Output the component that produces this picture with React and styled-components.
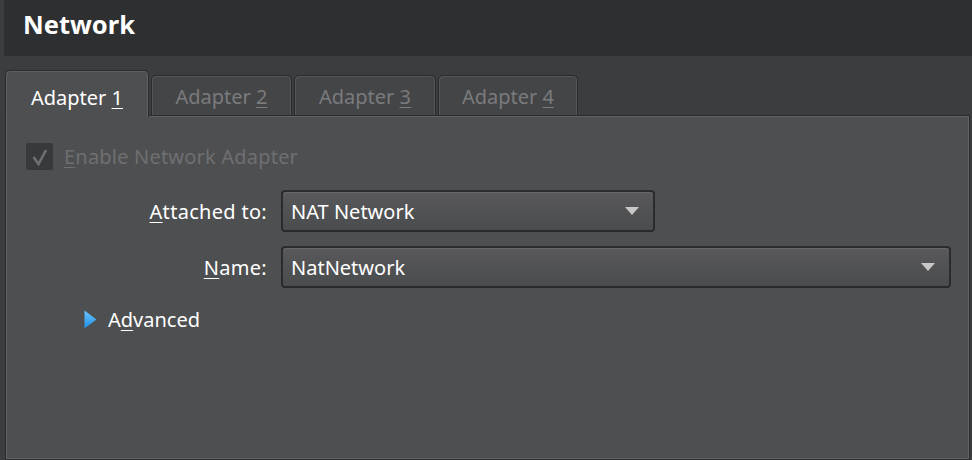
import styled, { createGlobalStyle } from 'styled-components';

const Global = createGlobalStyle`
  html, body {
    margin: 0;
    padding: 0;
    background: #3c3d3f;
    font-family: "Segoe UI", "Noto Sans", "Open Sans", sans-serif;
  }
`;

const Page = styled.div`
  width: 972px;
  height: 460px;
  display: flex;
  flex-direction: column;
  overflow: hidden;
  background: #3c3d3f;
`;

const Header = styled.div`
  margin-left: 4px;
  height: 56px;
  flex-shrink: 0;
  background: #2e2f31;
  display: flex;
  align-items: center;
  padding: 0 0 9px 19px;
  box-sizing: border-box;
  color: #ffffff;
  font-size: 25.5px;
  font-weight: 700;
`;

const TabBar = styled.div`
  display: flex;
  align-items: flex-end;
  gap: 2px;
  margin: 14px 0 0 5px;
  position: relative;
  z-index: 1;
`;

const Tab = styled.div`
  box-sizing: border-box;
  height: ${p => (p.$active ? '47px' : '40px')};
  width: ${p => p.$w}px;
  margin-bottom: ${p => (p.$active ? '-2px' : '0')};
  padding-top: ${p => (p.$active ? '6px' : '2px')};
  display: flex;
  align-items: center;
  justify-content: center;
  border: 1px solid #2a2b2d;
  border-bottom: none;
  border-radius: 5px 5px 0 0;
  background: ${p => (p.$active ? '#4e4f51' : '#444547')};
  box-shadow: inset 1px 1px 0 ${p => (p.$active ? '#5e5f61' : '#555658')},
    inset -1px 0 0 ${p => (p.$active ? '#5e5f61' : '#555658')};
  color: ${p => (p.$active ? '#ffffff' : '#7a7b7d')};
  font-size: 20px;
`;

const U = styled.span`
  text-decoration: underline;
  text-underline-offset: 3px;
  text-decoration-thickness: 1px;
`;

const Pane = styled.div`
  flex: 1;
  margin: 0 2px 0 5px;
  border: 1px solid #2a2b2d;
  box-shadow: inset 0 0 0 1px #626365;
  background: #4e4f51;
  padding: 27px 18px 0 20px;
  display: flex;
  flex-direction: column;
`;

const CheckRow = styled.div`
  display: flex;
  align-items: center;
  gap: 11px;
  color: #6e6f71;
  font-size: 20px;
  letter-spacing: 0.2px;
`;

const CheckBox = styled.div`
  width: 27px;
  height: 27px;
  background: #38393b;
  border-radius: 2px;
  display: flex;
  align-items: center;
  justify-content: center;
`;

const Form = styled.div`
  display: grid;
  grid-template-columns: 241px 1fr;
  column-gap: 14px;
  row-gap: 14px;
  margin-top: 20px;
  align-items: center;
`;

const Label = styled.div`
  text-align: right;
  color: #ffffff;
  font-size: 20px;
  letter-spacing: 0.3px;
`;

const Combo = styled.div`
  box-sizing: border-box;
  height: 42px;
  width: ${p => (p.$w ? `${p.$w}px` : '100%')};
  border: 2px solid #2a2b2d;
  border-radius: 4px;
  background: linear-gradient(#59595b, #505153 55%, #4b4c4e);
  box-shadow: inset 0 1px 0 #676869;
  display: flex;
  align-items: center;
  justify-content: space-between;
  padding: 0 14px 0 8px;
  color: #ffffff;
  font-size: 20px;
`;

const Arrow = styled.div`
  width: 0;
  height: 0;
  border-left: 7px solid transparent;
  border-right: 7px solid transparent;
  border-top: 8px solid #c8c8c8;
`;

const Advanced = styled.div`
  display: flex;
  align-items: center;
  gap: 11px;
  margin: 18px 0 0 58px;
  color: #ffffff;
  font-size: 20px;
`;

const tabs = [
  { n: '1', w: 144 },
  { n: '2', w: 141 },
  { n: '3', w: 142 },
  { n: '4', w: 140 },
];

export default function App() {
  return (
    <Page>
      <Global />
      <Header>Network</Header>
      <TabBar>
        {tabs.map((t, i) => (
          <Tab key={t.n} $active={i === 0} $w={t.w}>
            <span>
              Adapter <U>{t.n}</U>
            </span>
          </Tab>
        ))}
      </TabBar>
      <Pane>
        <CheckRow>
          <CheckBox>
            <svg width="18" height="18" viewBox="0 0 18 18">
              <path d="M2.5 9 L7.5 16 L15 2" fill="none" stroke="#6e6f71" strokeWidth="2.6" />
            </svg>
          </CheckBox>
          <span>
            <U>E</U>nable Network Adapter
          </span>
        </CheckRow>
        <Form>
          <Label>
            <U>A</U>ttached to:
          </Label>
          <Combo $w={374}>
            <span>NAT Network</span>
            <Arrow />
          </Combo>
          <Label>
            <U>N</U>ame:
          </Label>
          <Combo>
            <span>NatNetwork</span>
            <Arrow />
          </Combo>
        </Form>
        <Advanced>
          <svg width="13" height="19" viewBox="0 0 13 19">
            <defs>
              <linearGradient id="tri" x1="0" y1="0" x2="0" y2="1">
                <stop offset="0" stopColor="#6cc6ff" />
                <stop offset="1" stopColor="#1f8fe6" />
              </linearGradient>
            </defs>
            <path d="M0.5 0.5 L12.5 9.5 L0.5 18.5 Z" fill="url(#tri)" />
          </svg>
          <span>
            A<U>d</U>vanced
          </span>
        </Advanced>
      </Pane>
    </Page>
  );
}
